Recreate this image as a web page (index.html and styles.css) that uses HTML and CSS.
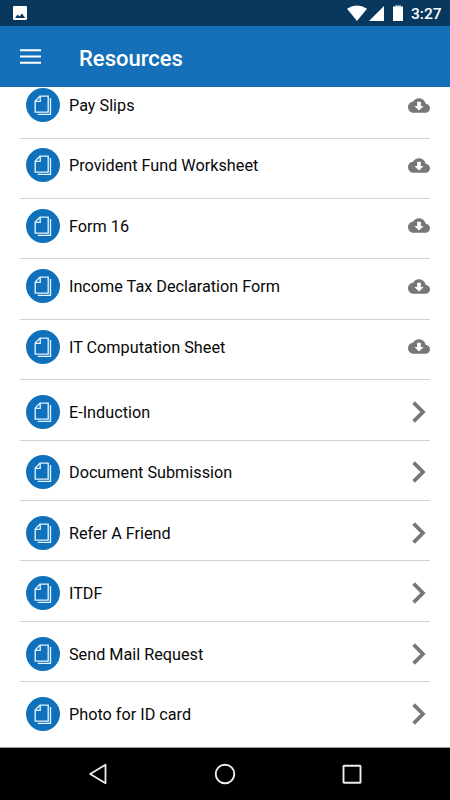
FILE: index.html
```html
<!DOCTYPE html>
<html lang="en">
<head>
<meta charset="utf-8">
<title>Resources</title>
<link rel="stylesheet" href="styles.css">
</head>
<body>
<svg class="sprites" width="0" height="0" aria-hidden="true">
  <symbol id="doc" viewBox="0 0 34 34">
    <circle cx="17" cy="17" r="17" fill="#0f71bc"/>
    <path d="M14 8.100H22.200V24.100H9.200V13.100ZM14.200 8.300V13.300H9.400M24.500 10.100V26.300H11.700" fill="none" stroke="#e6f3ff" stroke-width="1.350"/>
  </symbol>
  <symbol id="cloud" viewBox="0 4 24 16">
    <path d="M19.350 10.040C18.670 6.590 15.640 4 12 4 9.110 4 6.600 5.640 5.350 8.040 2.340 8.360 0 10.910 0 14c0 3.310 2.690 6 6 6h13c2.760 0 5-2.240 5-5 0-2.640-2.050-4.780-4.650-4.960zM17 12.500l-5 5-5-5h3V8h4V12.500h3z" fill="#777"/>
  </symbol>
  <symbol id="chevron" viewBox="0 0 14 22">
    <path d="M1.600 1.600 11 11 1.600 20.400" fill="none" stroke="#777" stroke-width="3.700"/>
  </symbol>
</svg>
<div class="status">
  <svg class="picture" width="14" height="14" viewBox="0 0 14 14"><rect width="14" height="14" rx="1.300" fill="#fff"/><path d="M2 12 4.600 8.600 6.500 10.600 9 7.500 12.200 12Z" fill="#09385e"/></svg>
  <div class="signals">
    <svg class="wifi" width="20" height="16" viewBox="0 0 20 16"><path d="M0 3.700Q10-2.800 20 3.700L10 16Z" fill="#fff"/></svg>
    <svg class="cell" width="15" height="15" viewBox="0 0 15 15"><path d="M15 0V15H0Z" fill="#fff"/></svg>
    <svg class="battery" width="10" height="16" viewBox="0 0 10 16"><path d="M2.500 0H7.500V1.500H10V16H0V1.500H2.500Z" fill="#fff"/><path d="M2.500 0H7.500V1.400H2.500Z" fill="#8399aa"/></svg>
    <span class="time">3:27</span>
  </div>
</div>
<header class="appbar">
  <svg class="menu" width="21" height="15" viewBox="0 0 21 15"><path d="M0 1.200H21M0 7.500H21M0 13.800H21" stroke="#fff" stroke-width="2"/></svg>
  <h1 class="title">Resources</h1>
</header>
<main class="content">
  <ul class="list">
    <li class="row"><svg class="doc"><use href="#doc"/></svg><span class="label">Pay Slips</span><svg class="cloud"><use href="#cloud"/></svg></li>
    <li class="row"><svg class="doc"><use href="#doc"/></svg><span class="label">Provident Fund Worksheet</span><svg class="cloud"><use href="#cloud"/></svg></li>
    <li class="row"><svg class="doc"><use href="#doc"/></svg><span class="label">Form 16</span><svg class="cloud"><use href="#cloud"/></svg></li>
    <li class="row"><svg class="doc"><use href="#doc"/></svg><span class="label">Income Tax Declaration Form</span><svg class="cloud"><use href="#cloud"/></svg></li>
    <li class="row"><svg class="doc"><use href="#doc"/></svg><span class="label">IT Computation Sheet</span><svg class="cloud"><use href="#cloud"/></svg></li>
    <li class="row link"><svg class="doc"><use href="#doc"/></svg><span class="label">E-Induction</span><svg class="chevron"><use href="#chevron"/></svg></li>
    <li class="row link"><svg class="doc"><use href="#doc"/></svg><span class="label">Document Submission</span><svg class="chevron"><use href="#chevron"/></svg></li>
    <li class="row link"><svg class="doc"><use href="#doc"/></svg><span class="label">Refer A Friend</span><svg class="chevron"><use href="#chevron"/></svg></li>
    <li class="row link"><svg class="doc"><use href="#doc"/></svg><span class="label">ITDF</span><svg class="chevron"><use href="#chevron"/></svg></li>
    <li class="row link"><svg class="doc"><use href="#doc"/></svg><span class="label">Send Mail Request</span><svg class="chevron"><use href="#chevron"/></svg></li>
    <li class="row link"><svg class="doc"><use href="#doc"/></svg><span class="label">Photo for ID card</span><svg class="chevron"><use href="#chevron"/></svg></li>
  </ul>
</main>
<nav class="navbar">
  <svg width="18" height="22" viewBox="0 0 18 22"><path d="M16.500 1.800V20.200L1.200 11Z" fill="none" stroke="#eee" stroke-width="1.800" stroke-linejoin="round"/></svg>
  <svg width="22" height="22" viewBox="0 0 22 22"><circle cx="11" cy="11" r="9.300" fill="none" stroke="#eee" stroke-width="1.900"/></svg>
  <svg width="20" height="20" viewBox="0 0 20 20"><rect x="1.500" y="1.800" width="17" height="17" rx=".6" fill="none" stroke="#eee" stroke-width="1.900"/></svg>
</nav>
</body>
</html>
```
FILE: styles.css
```css
* { box-sizing: border-box; }
body {
  margin: 0;
  width: 450px;
  height: 800px;
  display: flex;
  flex-direction: column;
  overflow: hidden;
  background: #fff;
  font-family: Roboto, sans-serif;
}
svg { flex: none; display: block; }
.sprites { position: absolute; }
.status {
  flex: none;
  height: 26px;
  padding: 0 9px 0 13px;
  display: flex;
  align-items: center;
  justify-content: space-between;
  background: #09385e;
}
.signals { display: flex; align-items: center; }
.cell { margin-left: 2px; }
.battery { margin-left: 9px; }
.time {
  margin-left: 8px;
  padding-top: 2px;
  width: 30px;
  color: #fff;
  font-size: 15.500px;
  font-weight: 500;
  line-height: 24px;
  white-space: nowrap;
}
.appbar {
  flex: none;
  height: 61px;
  padding: 0 20px;
  display: flex;
  align-items: center;
  background: #1570b9;
}
.title {
  margin: 4px 0 0 38px;
  color: #fff;
  font-size: 22px;
  font-weight: 500;
  line-height: 30px;
}
.content {
  flex: none;
  height: 661px;
  overflow: hidden;
  border-bottom: 1px solid #999;
}
.list {
  list-style: none;
  margin: -8.700px 20px 0;
  padding: 0;
}
.row {
  height: 60.400px;
  padding: 0 0 6px 5.600px;
  display: flex;
  align-items: center;
  border-bottom: 1px solid #d3d3d3;
}
.row.link { padding: 4px 4px 0 5.600px; }
.row:last-child { border-bottom-color: transparent; }
.doc { width: 34px; height: 34px; }
.label {
  flex: 1;
  margin-left: 9.400px;
  padding-top: 2px;
  color: #080808;
  font-size: 16.230px;
  line-height: 24px;
}
.cloud { width: 22px; height: 15px; }
.chevron { width: 14px; height: 22px; }
.navbar {
  flex: 1;
  padding: 0 88px 0 89px;
  display: flex;
  align-items: center;
  justify-content: space-between;
  background: #000;
}
```
